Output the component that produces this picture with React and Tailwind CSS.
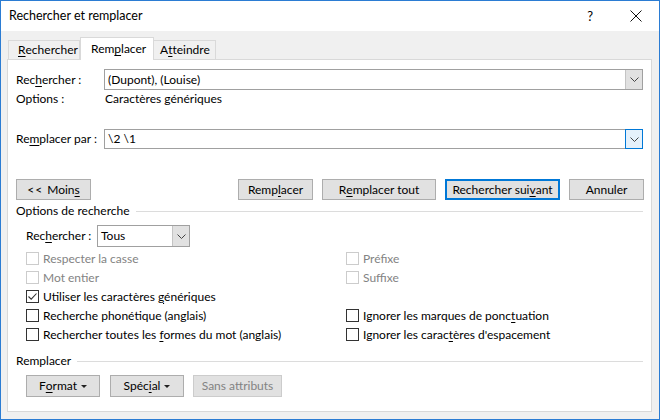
import React from "react";

const U = ({ text, at }) => {
  if (at < 0) return <>{text}</>;
  return (
    <>
      {text.slice(0, at)}
      <span className="underline underline-offset-2">{text[at]}</span>
      {text.slice(at + 1)}
    </>
  );
};

const Chevron = () => (
  <svg width="9" height="5" viewBox="0 0 9 5">
    <path d="M0.5 0.5 L4.5 4.5 L8.5 0.5" fill="none" stroke="#444" strokeWidth="1" />
  </svg>
);

const SmallArrow = () => (
  <svg width="6" height="3" viewBox="0 0 6 3" className="ml-[4px]">
    <path d="M0 0 H6 L3 3 Z" fill="#222" />
  </svg>
);

const Button = ({ children, className = "", primary, disabled }) => (
  <div
    className={`flex items-center justify-center h-[21px] ${
      primary
        ? "border-2 border-[#0078d7]"
        : disabled
        ? "border border-[#cccccc] text-[#838383]"
        : "border border-[#adadad]"
    } bg-[#e1e1e1] ${className}`}
  >
    {children}
  </div>
);

const Check = ({ label, at = -1, checked, disabled }) => (
  <div className="flex items-center h-[19px]">
    <div
      className={`w-[13px] h-[13px] border bg-white flex items-center justify-center ${
        disabled ? "border-[#cccccc]" : "border-[#333333]"
      }`}
    >
      {checked && (
        <svg width="11" height="11" viewBox="0 0 11 11">
          <path d="M1.5 5.5 L4.2 8.2 L9.5 2.5" fill="none" stroke="#333" strokeWidth="1.1" />
        </svg>
      )}
    </div>
    <span className={`ml-[4px] ${disabled ? "text-[#838383]" : ""}`}>
      <U text={label} at={at} />
    </span>
  </div>
);

const Section = ({ title }) => (
  <div className="flex items-center h-[22px] pl-[8px] pr-[8px]">
    <span>{title}</span>
    <div className="flex-1 h-px bg-[#dcdcdc] ml-[6px]" />
  </div>
);

export default function App() {
  return (
    <div
      className="w-[660px] h-[420px] border border-[#2b7cd3] bg-[#f0f0f0] flex flex-col text-[12px] text-black leading-none"
      style={{ fontFamily: "Lato, 'Noto Sans', sans-serif" }}
    >
      {/* title bar */}
      <div className="h-[30px] bg-white flex items-center pl-[8px] shrink-0">
        <span className="text-[12.5px]">Rechercher et remplacer</span>
        <div className="flex-1" />
        <span className="text-[13px] mr-[37px]">?</span>
        <svg width="12" height="12" viewBox="0 0 12 12" className="mr-[17px]">
          <path d="M0.5 0.5 L11.5 11.5 M11.5 0.5 L0.5 11.5" stroke="#111" strokeWidth="1" />
        </svg>
      </div>

      <div className="flex-1 flex flex-col px-[6px] pt-[6px]">
        {/* tabs */}
        <div className="flex items-end h-[22px] pl-[1px] relative z-10">
          <div className="h-[19px] w-[72px] border border-b-0 border-[#d9d9d9] flex items-center pl-[9px]">
            <U text="Rechercher" at={0} />
          </div>
          <div className="h-[23px] w-[74px] border border-b-0 border-[#d9d9d9] bg-white flex items-center pl-[10px] mb-[-1px]">
            <U text="Remplacer" at={3} />
          </div>
          <div className="h-[19px] w-[62px] border border-b-0 border-l-0 border-[#d9d9d9] flex items-center pl-[6px]">
            <U text="Atteindre" at={1} />
          </div>
        </div>

        {/* panel */}
        <div className="w-[645px] h-[353px] border border-[#d9d9d9] bg-white flex flex-col">
          <div className="flex items-center h-[21px] mt-[9px] pl-[8px]">
            <span className="w-[88px]">
              <U text="Rechercher :" at={3} />
            </span>
            <div className="w-[539px] h-[21px] border border-[#a0a0a0] flex items-center">
              <span className="flex-1 pl-[3px]">(Dupont), (Louise)</span>
              <div className="w-[17px] h-[19px] bg-[#e1e1e1] border-l border-[#c4c4c4] flex items-center justify-center">
                <Chevron />
              </div>
            </div>
          </div>

          <div className="flex items-center h-[18px] pl-[8px]">
            <span className="w-[89px]">Options :</span>
            <span>Caractères génériques</span>
          </div>

          <div className="flex items-center h-[20px] mt-[21px] pl-[8px]">
            <span className="w-[88px]">
              <U text="Remplacer par :" at={2} />
            </span>
            <div className="w-[539px] h-[20px] border border-[#a0a0a0] flex items-center">
              <span className="flex-1 pl-[3px]">\2 \1</span>
              <div className="w-[18px] h-[20px] mr-[-1px] bg-[#e5f1fb] border border-[#0078d7] flex items-center justify-center">
                <Chevron />
              </div>
            </div>
          </div>

          <div className="flex items-center h-[21px] mt-[30px] pl-[8px]">
            <Button className="w-[75px]">
              <span className="tracking-[1px]">&lt;&lt;</span>
              <span className="ml-[4px]">
                <U text="Moins" at={4} />
              </span>
            </Button>
            <Button className="w-[75px] ml-[147px]">
              <U text="Remplacer" at={4} />
            </Button>
            <Button className="w-[114px] ml-[9px]">
              <U text="Remplacer tout" at={1} />
            </Button>
            <Button className="w-[115px] ml-[9px]" primary>
              <U text="Rechercher suivant" at={14} />
            </Button>
            <Button className="w-[75px] ml-[9px]">Annuler</Button>
          </div>

          <Section title="Options de recherche" />

          <div className="flex items-center h-[22px] mt-[3px] pl-[18px]">
            <span className="w-[71px]">
              <U text="Rechercher :" at={3} />
            </span>
            <div className="w-[93px] h-[22px] border border-[#a0a0a0] flex items-center">
              <span className="flex-1 pl-[3px]">Tous</span>
              <div className="w-[17px] h-[20px] bg-[#e1e1e1] border-l border-[#c4c4c4] flex items-center justify-center">
                <Chevron />
              </div>
            </div>
          </div>

          <div className="grid grid-cols-[320px_1fr] mt-[2px] pl-[18px]">
            <Check label="Respecter la casse" disabled />
            <Check label="Préfixe" disabled />
            <Check label="Mot entier" disabled />
            <Check label="Suffixe" disabled />
            <Check label="Utiliser les caractères génériques" at={24} checked />
            <div className="h-[19px]" />
            <Check label="Recherche phonétique (anglais)" at={16} />
            <Check label="Ignorer les marques de ponctuation" at={27} />
            <Check label="Rechercher toutes les formes du mot (anglais)" at={22} />
            <Check label="Ignorer les caractères d'espacement" at={17} />
          </div>

          <div className="mt-[6px]">
            <Section title="Remplacer" />
          </div>

          <div className="flex items-center h-[22px] mt-[3px] pl-[18px]">
            <Button className="w-[74px] h-[22px]">
              <U text="Format" at={1} />
              <SmallArrow />
            </Button>
            <Button className="w-[74px] h-[22px] ml-[10px]">
              <U text="Spécial" at={4} />
              <SmallArrow />
            </Button>
            <Button className="w-[89px] h-[22px] ml-[9px]" disabled>
              Sans attributs
            </Button>
          </div>
        </div>
      </div>
    </div>
  );
}
